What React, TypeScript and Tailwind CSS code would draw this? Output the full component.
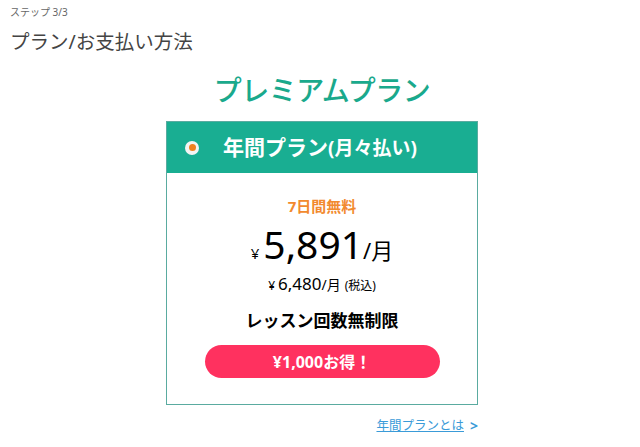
import React from 'react'

const App = () => {
  return (
    <div
      className="w-[640px] h-[447px] bg-white overflow-hidden"
      style={{ fontFamily: '"Noto Sans", "Noto Sans CJK JP", sans-serif' }}
    >
      <div className="px-[10px] pt-[5px]">
        <p className="text-[10px] leading-[14px] text-[#666]">ステップ 3/3</p>
        <h1 className="mt-[12px] text-[19.5px] leading-[22px] text-[#444]">プラン/お支払い方法</h1>
      </div>

      <div className="flex flex-col items-center pl-[4px]">
        <h2 className="mt-[20px] text-[28px] leading-[34px] font-medium text-[#1aa98c] tracking-[-0.5px]">
          プレミアムプラン
        </h2>

        <div className="mt-[14px] w-[312px] border-[1.5px] border-[#5aaba0] bg-white">
          {/* header */}
          <div className="h-[51px] bg-[#19ae92] flex items-center">
            <span className="ml-[18px] w-[14px] h-[14px] rounded-full bg-[#f4f4f4] flex items-center justify-center">
              <span className="w-[7px] h-[7px] rounded-full bg-[#f0811f]" />
            </span>
            <span className="ml-[24px] text-[21px] font-bold text-white leading-none">
              年間プラン<span className="text-[19px]">(月々払い)</span>
            </span>
          </div>

          {/* body */}
          <div className="flex flex-col items-center pt-[24px] pb-[26px]">
            <p className="text-[15px] leading-[18px] font-bold text-[#f28a2e]">7日間無料</p>
            <p className="mt-[9px] flex items-baseline text-black leading-none">
              <span className="text-[15px] mr-[4px]">¥</span>
              <span className="text-[39px]">5,891</span>
              <span className="text-[22px]">/月</span>
            </p>
            <p className="mt-[12px] flex items-baseline text-black leading-none">
              <span className="text-[12px] mr-[3px]">¥</span>
              <span className="text-[17px]">6,480</span>
              <span className="text-[14px]">/月</span>
              <span className="text-[12px] ml-[4px]">(税込)</span>
            </p>
            <p className="mt-[19px] text-[17px] leading-[20px] font-bold text-black">レッスン回数無制限</p>
            <div className="mt-[14px] w-[235px] h-[33px] rounded-full bg-[#ff315f] flex items-center justify-center">
              <span className="text-[16px] font-bold text-white leading-none">¥1,000お得！</span>
            </div>
          </div>
        </div>

        <div className="w-[312px] flex justify-end mt-[13px]">
          <a className="text-[12.5px] leading-[16px] text-[#3a9bd8] flex items-center">
            <span className="underline">年間プランとは</span>
            <span className="ml-[6px] text-[14px] font-bold">&gt;</span>
          </a>
        </div>
      </div>
    </div>
  )
}

export default App
